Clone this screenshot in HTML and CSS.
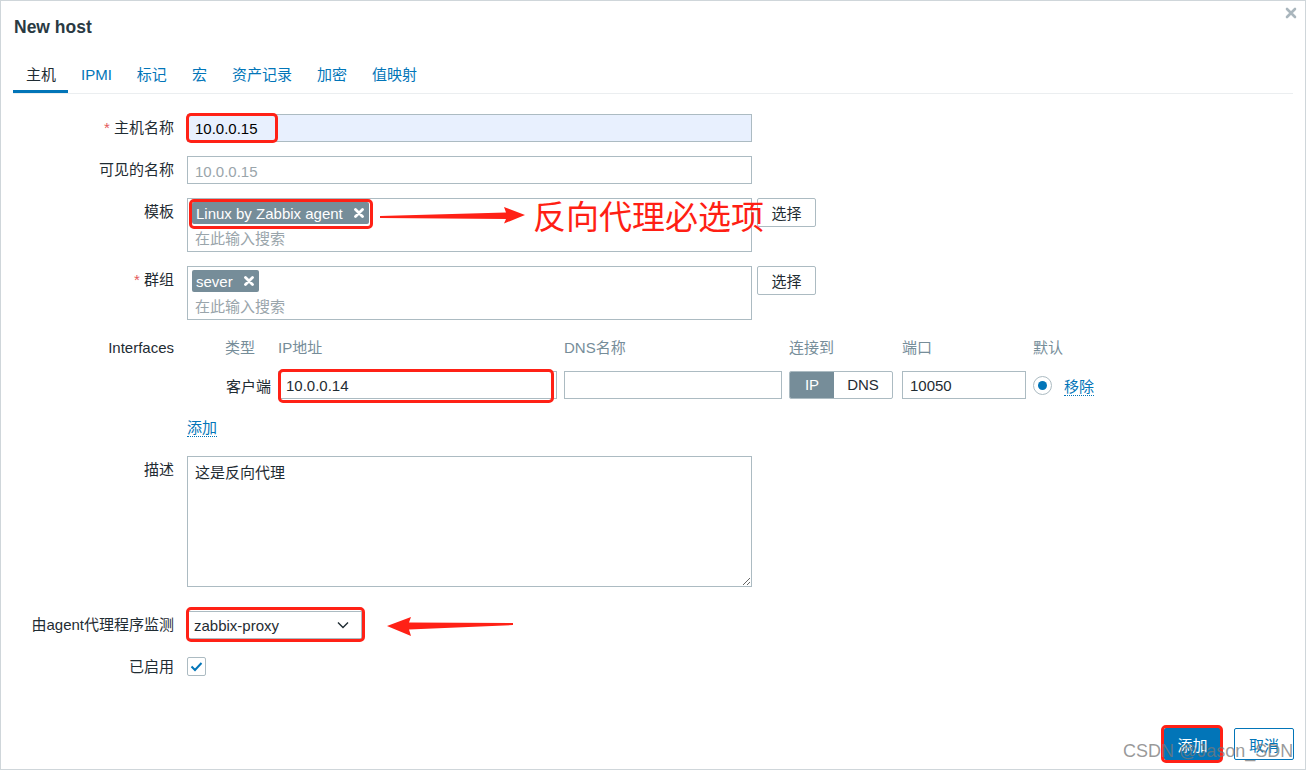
FILE: index.html
```html
<!DOCTYPE html>
<html lang="zh-CN">
<head>
    <meta charset="UTF-8">
    <meta name="viewport" content="width=device-width, initial-scale=1.0">
    <title>New host</title>
    <link rel="stylesheet" href="styles.css">
</head>
<body>
    <div class="dialog">
        <div class="dialog-head">
            <h4 class="dialog-title">New host</h4>
            <button class="btn-close" title="关闭">
                <svg width="12" height="12" viewBox="0 0 12 12"><path d="M2 2 L10 10 M10 2 L2 10" stroke="#aab6bd" stroke-width="2.6" stroke-linecap="round"/></svg>
            </button>
        </div>

        <ul class="tabs">
            <li class="active"><a>主机</a></li>
            <li><a>IPMI</a></li>
            <li><a>标记</a></li>
            <li><a>宏</a></li>
            <li><a>资产记录</a></li>
            <li><a>加密</a></li>
            <li><a>值映射</a></li>
        </ul>

        <div class="form">
            <div class="form-row">
                <div class="form-label"><span class="req">*</span> 主机名称</div>
                <div class="form-field"><div class="text-box wide autofill">10.0.0.15</div></div>
            </div>

            <div class="form-row">
                <div class="form-label">可见的名称</div>
                <div class="form-field"><div class="text-box wide placeholder">10.0.0.15</div></div>
            </div>

            <div class="form-row">
                <div class="form-label">模板</div>
                <div class="form-field field-inline">
                    <div class="multiselect">
                        <div class="ms-tags">
                            <span class="tag">Linux by Zabbix agent<svg class="tag-x" width="10" height="10" viewBox="0 0 10 10"><path d="M1.5 1.5 L8.5 8.5 M8.5 1.5 L1.5 8.5" stroke="#fff" stroke-width="2.8" stroke-linecap="round"/></svg></span>
                        </div>
                        <div class="ms-search">在此输入搜索</div>
                    </div>
                    <button class="btn-alt">选择</button>
                </div>
            </div>

            <div class="form-row">
                <div class="form-label"><span class="req">*</span> 群组</div>
                <div class="form-field field-inline">
                    <div class="multiselect">
                        <div class="ms-tags">
                            <span class="tag">sever<svg class="tag-x" width="10" height="10" viewBox="0 0 10 10"><path d="M1.5 1.5 L8.5 8.5 M8.5 1.5 L1.5 8.5" stroke="#fff" stroke-width="2.8" stroke-linecap="round"/></svg></span>
                        </div>
                        <div class="ms-search">在此输入搜索</div>
                    </div>
                    <button class="btn-alt">选择</button>
                </div>
            </div>

            <div class="form-row">
                <div class="form-label">Interfaces</div>
                <div class="form-field">
                    <div class="iface-grid">
                        <div class="iface-head head-type">类型</div>
                        <div class="iface-head">IP地址</div>
                        <div class="iface-head">DNS名称</div>
                        <div class="iface-head">连接到</div>
                        <div class="iface-head">端口</div>
                        <div class="iface-head">默认</div>
                        <div></div>

                        <div class="iface-type">客户端</div>
                        <div class="text-box">10.0.0.14</div>
                        <div class="text-box"></div>
                        <div class="toggle"><span class="on">IP</span><span>DNS</span></div>
                        <div class="text-box">10050</div>
                        <div class="radio"><span></span></div>
                        <div><a class="link">移除</a></div>
                    </div>
                    <div class="add-row"><a class="link">添加</a></div>
                </div>
            </div>

            <div class="form-row">
                <div class="form-label">描述</div>
                <div class="form-field"><textarea class="text-area" readonly>这是反向代理</textarea></div>
            </div>

            <div class="form-row row-proxy">
                <div class="form-label">由agent代理程序监测</div>
                <div class="form-field">
                    <div class="select">
                        <span>zabbix-proxy</span>
                        <svg width="12" height="8" viewBox="0 0 12 8"><polyline points="1,1.5 6,6.5 11,1.5" fill="none" stroke="#1f2c33" stroke-width="1.4"/></svg>
                    </div>
                </div>
            </div>

            <div class="form-row">
                <div class="form-label">已启用</div>
                <div class="form-field">
                    <div class="checkbox">
                        <svg width="17" height="17" viewBox="0 0 17 17"><polyline points="3.5,8.5 7,12 13.5,5" fill="none" stroke="#0275b8" stroke-width="2"/></svg>
                    </div>
                </div>
            </div>
        </div>

        <div class="dialog-foot">
            <button class="btn-main">添加</button>
            <button class="btn-cancel">取消</button>
        </div>

        <!-- red annotations drawn over the screenshot -->
        <span class="mark mark-host"></span>
        <span class="mark mark-tpl"></span>
        <span class="mark mark-ip"></span>
        <span class="mark mark-proxy"></span>
        <span class="mark mark-add"></span>
        <div class="note">反向代理必选项</div>
        <svg class="arrows" width="1306" height="770" viewBox="0 0 1306 770">
            <polygon points="380,216 506,212.5 504,207 525,215 504,223.5 506,219 380,218" fill="#ff2116"/>
            <polygon points="387,626 411,617 409,622.5 513,623 513,625 409,629.5 411,636" fill="#ff2116"/>
        </svg>
        <div class="watermark">CSDN @Jason_SDN</div>
    </div>
</body>
</html>
```

FILE: styles.css
```css
body {
    margin: 0;
    background-color: white;
    font-family: "Liberation Sans", Arial, "Noto Sans CJK SC", sans-serif;
    font-size: 15px;
    color: #1f2c33;
}

.dialog {
    position: relative;
    width: 1306px;
    height: 770px;
    box-sizing: border-box;
    border: 1px solid #cfd6da;
    display: flex;
    flex-direction: column;
}

.dialog-head {
    padding: 16px 13px 0;
}

.dialog-title {
    margin: 0;
    font-size: 17.5px;
    line-height: 20px;
    font-weight: bold;
    color: #2a3a43;
}

.btn-close {
    position: absolute;
    top: 6px;
    right: 8px;
    padding: 0;
    border: 0;
    background: none;
}

.tabs {
    list-style: none;
    display: flex;
    margin: 20px 12px 0;
    padding: 0;
    border-bottom: 1px solid #ebeef0;
}

.tabs li a {
    display: block;
    padding: 9px 12px 6px 13px;
    line-height: 18px;
    color: #0275b8;
    border-bottom: 3px solid transparent;
}

.tabs li.active a {
    color: #1f2c33;
    border-bottom-color: #0275b8;
}

.form {
    flex: 1;
    display: flex;
    flex-direction: column;
    gap: 14px;
    padding-top: 20px;
}

.form-row {
    display: flex;
    align-items: flex-start;
}

.row-proxy {
    margin-top: 10px;
}

.form-label {
    width: 173px;
    flex-shrink: 0;
    margin-right: 13px;
    text-align: right;
    line-height: 28px;
    white-space: nowrap;
}

.req {
    color: #e45959;
}

.field-inline {
    display: flex;
    align-items: flex-start;
}

.text-box {
    height: 28px;
    box-sizing: border-box;
    border: 1px solid #acbbc2;
    padding: 0 7px;
    line-height: 27px;
    background-color: white;
}

.text-box.wide {
    width: 565px;
}

.autofill {
    background-color: #e8f0fe;
    color: #000;
}

.placeholder {
    color: #9aa5ab;
    line-height: 29px;
}

.multiselect {
    width: 565px;
    height: 54px;
    box-sizing: border-box;
    border: 1px solid #acbbc2;
    padding: 3px 4px;
}

.ms-tags {
    display: flex;
    gap: 4px;
}

.tag {
    display: inline-flex;
    align-items: center;
    height: 22px;
    padding: 0 5px 0 4px;
    background-color: #768d99;
    color: white;
    border-radius: 2px;
}

.tag-x {
    margin-left: 11px;
}

.ms-search {
    margin-top: 3px;
    line-height: 24px;
    padding-left: 3px;
    color: #9aa5ab;
}

.btn-alt {
    margin-left: 5px;
    width: 59px;
    height: 29px;
    border: 1px solid #acbbc2;
    border-radius: 2px;
    background-color: white;
    font-family: inherit;
    font-size: 15px;
    color: #1f2c33;
}

.iface-grid {
    display: grid;
    grid-template-columns: 84px 279px 218px 106px 124px 24px auto;
    grid-template-rows: 28px 28px;
    column-gap: 7px;
    row-gap: 9px;
    align-items: center;
}

.iface-head {
    color: #768d99;
    line-height: 28px;
    white-space: nowrap;
}

.head-type {
    padding-left: 38px;
}

.iface-type {
    text-align: right;
}

.toggle {
    display: flex;
    width: 104px;
    height: 28px;
    box-sizing: border-box;
    border: 1px solid #acbbc2;
    border-radius: 2px;
    overflow: hidden;
    line-height: 26px;
}

.toggle span {
    flex: 1;
    text-align: center;
}

.toggle span.on {
    flex: 0 0 44px;
    background-color: #768d99;
    color: white;
}

.radio {
    width: 19px;
    height: 19px;
    box-sizing: border-box;
    border: 1px solid #acbbc2;
    border-radius: 50%;
    display: flex;
    align-items: center;
    justify-content: center;
}

.radio span {
    width: 9px;
    height: 9px;
    border-radius: 50%;
    background-color: #0275b8;
}

.link {
    color: #0275b8;
    text-decoration: none;
    border-bottom: 1px dotted #0275b8;
}

.add-row {
    margin-top: 15px;
    line-height: 28px;
}

.text-area {
    display: block;
    width: 565px;
    height: 131px;
    box-sizing: border-box;
    border: 1px solid #acbbc2;
    padding: 6px 7px;
    margin: 0;
    font-family: inherit;
    font-size: 15px;
    line-height: 20px;
    color: #1f2c33;
    resize: vertical;
    outline: none;
}

.select {
    width: 175px;
    height: 28px;
    box-sizing: border-box;
    border: 1px solid #acbbc2;
    padding: 0 12px 0 6px;
    display: flex;
    align-items: center;
    justify-content: space-between;
}

.checkbox {
    margin-top: 4px;
    width: 19px;
    height: 19px;
    box-sizing: border-box;
    border: 1px solid #acbbc2;
    border-radius: 2px;
    display: flex;
    align-items: center;
    justify-content: center;
}

.dialog-foot {
    display: flex;
    justify-content: flex-end;
    gap: 13px;
    padding: 0 11px 9px;
}

.btn-main,
.btn-cancel {
    height: 32px;
    border: 1px solid #0275b8;
    border-radius: 2px;
    font-family: inherit;
    font-size: 15px;
    padding: 0;
}

.btn-main {
    width: 57px;
    background-color: #0275b8;
    color: white;
}

.btn-cancel {
    width: 60px;
    background-color: white;
    color: #0275b8;
}

/* annotations */
.mark {
    position: absolute;
    box-sizing: border-box;
    border: 3px solid #ff2116;
    border-radius: 5px;
}

.mark-host { left: 185px; top: 112px; width: 92px; height: 30px; }
.mark-tpl { left: 188px; top: 198px; width: 184px; height: 30px; }
.mark-ip { left: 277px; top: 368px; width: 276px; height: 34px; }
.mark-proxy { left: 185px; top: 606px; width: 179px; height: 35px; }
.mark-add { left: 1160px; top: 724px; width: 62px; height: 38px; }

.note {
    position: absolute;
    left: 532px;
    top: 193px;
    font-family: "Noto Sans CJK SC", sans-serif;
    font-size: 33px;
    line-height: 42px;
    color: #ff1f14;
}

.arrows {
    position: absolute;
    left: -1px;
    top: -1px;
    pointer-events: none;
}

.watermark {
    position: absolute;
    left: 1122px;
    top: 739px;
    font-size: 18px;
    line-height: 22px;
    color: rgba(120, 120, 120, 0.75);
}
```
